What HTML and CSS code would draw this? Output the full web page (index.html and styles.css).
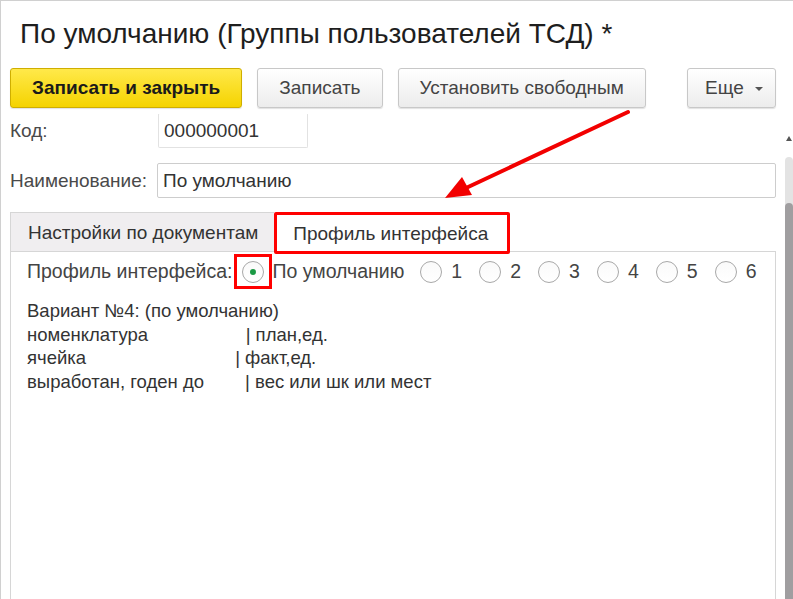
FILE: index.html
```html
<!DOCTYPE html>
<html lang="ru">
<head>
    <meta charset="UTF-8">
    <title>По умолчанию (Группы пользователей ТСД)</title>
    <link rel="stylesheet" href="styles.css">
</head>
<body>
    <div class="window">
        <h1 class="title">По умолчанию (Группы пользователей ТСД) *</h1>
        <div class="toolbar">
            <button class="btn btnMain">Записать и закрыть</button>
            <button class="btn">Записать</button>
            <button class="btn">Установить свободным</button>
            <button class="btn btnMore">Еще <span class="caret"></span></button>
        </div>
        <div class="content">
            <div class="form">
                <div class="row rowCode">
                    <label class="label">Код:</label>
                    <div class="field fieldCode">000000001</div>
                </div>
                <div class="row">
                    <label class="label">Наименование:</label>
                    <div class="field fieldName">По умолчанию</div>
                </div>
                <div class="tabs">
                    <div class="tab">Настройки по документам</div>
                    <div class="tab current">Профиль интерфейса</div>
                    <div class="tabsRest"></div>
                </div>
                <div class="panel">
                    <div class="radios">
                        <span class="radiosLabel">Профиль интерфейса:</span>
                        <span class="mark"><span class="radio checked"></span></span>
                        <span class="radioText">По умолчанию</span>
                        <span class="option"><span class="radio"></span><span class="radioText">1</span></span>
                        <span class="option"><span class="radio"></span><span class="radioText">2</span></span>
                        <span class="option"><span class="radio"></span><span class="radioText">3</span></span>
                        <span class="option"><span class="radio"></span><span class="radioText">4</span></span>
                        <span class="option"><span class="radio"></span><span class="radioText">5</span></span>
                        <span class="option"><span class="radio"></span><span class="radioText">6</span></span>
                    </div>
<pre class="note">Вариант №4: (по умолчанию)
номенклатура                   | план,ед.
ячейка                             | факт,ед.
выработан, годен до        | вес или шк или мест</pre>
                </div>
            </div>
            <div class="scrollbar">
                <span class="scrollUp"></span>
                <div class="track"><div class="thumb"></div></div>
            </div>
        </div>
        <!-- стрелка-указатель поверх формы -->
        <svg class="arrow" width="793" height="599" viewBox="0 0 793 599">
            <line x1="628" y1="112" x2="466" y2="188" stroke="#f20000" stroke-width="4" stroke-linecap="round"/>
            <polygon points="445,198 472,195 462,177" fill="#f20000"/>
        </svg>
    </div>
</body>
</html>
```

FILE: styles.css
```css
*{
    margin:0;
    padding:0;
    box-sizing:border-box;
}
body{
    font-family:"Liberation Sans", Arial, sans-serif;
    color:#333;
    background:#fff;
}
.window{
    position:relative;
    width:793px;
    height:599px;
    overflow:hidden;
    border-left:1px solid #d0d0d0;
    border-top:1px solid #d0d0d0;
}
.title{
    height:67px;
    padding:17px 0 0 19px;
    font-size:28px;
    line-height:32px;
    font-weight:normal;
    color:#1e1e1e;
}
.toolbar{
    display:flex;
    height:46px;
    padding:0 17px 0 9px;
}
.btn{
    height:40px;
    padding:0 21px;
    margin-right:15px;
    font-family:inherit;
    font-size:19px;
    color:#444;
    background:linear-gradient(#fff, #ececec);
    border:1px solid #c8c8c8;
    border-radius:3px;
    box-shadow:0 1px 1px rgba(0,0,0,.12);
}
.btnMain{
    font-weight:bold;
    color:#1a1a1a;
    background:linear-gradient(#ffe94a, #f5d300);
    border-color:#cfae00;
}
.btnMore{
    margin-left:auto;
    margin-right:0;
    padding:0 12px 0 17px;
}
.caret{
    display:inline-block;
    margin-left:6px;
    vertical-align:middle;
    border-left:4px solid transparent;
    border-right:4px solid transparent;
    border-top:4px solid #555;
}
.content{
    display:flex;
    height:485px;
    padding-left:9px;
    overflow:hidden;
}
.form{
    width:766px;
}
.row{
    display:flex;
    align-items:center;
    margin-bottom:15px;
}
.rowCode{
    margin-top:-1px;
}
.label{
    width:147px;
    font-size:19px;
    color:#4a4a4a;
}
.field{
    height:35px;
    padding:0 5px;
    line-height:33px;
    font-size:19px;
    color:#333;
    border:1px solid #cdcdcd;
    border-radius:2px;
}
.fieldCode{
    width:150px;
    margin-left:1px;
    border-color:#e2e2e2;
    border-top-color:transparent;
}
.fieldName{
    flex:1;
}
.tabs{
    display:flex;
    height:40px;
    margin-top:-1px;
}
.tab{
    height:40px;
    padding:0 16px 0 17px;
    line-height:39px;
    font-size:19px;
    color:#333;
    background:#f0eef0;
    border:1px solid #d6d6d6;
    border-right:none;
}
.tab.current{
    position:relative;
    height:42px;
    padding:0 19px 0 16px;
    background:#fff;
    border:3px solid #f00;
    border-radius:2px;
    line-height:37px;
}
.tabsRest{
    flex:1;
    border-bottom:1px solid #d6d6d6;
}
.panel{
    height:400px;
    border:1px solid #d6d6d6;
    border-top:none;
    padding:2px 0 0 16px;
}
.radios{
    display:flex;
    align-items:center;
    height:35px;
    font-size:19.5px;
    color:#444;
}
.mark{
    display:flex;
    align-items:center;
    justify-content:center;
    width:38px;
    height:35px;
    margin-left:2px;
    border:3px solid #f00;
}
.radio{
    display:inline-block;
    position:relative;
    width:22px;
    height:22px;
    border:1px solid #a8a8a8;
    border-radius:50%;
    background:linear-gradient(#fafafa, #fff);
}
.radio.checked:after{
    content:"";
    position:absolute;
    left:7px;
    top:7px;
    width:6px;
    height:6px;
    border-radius:50%;
    background:#1a9944;
}
.radioText{
    margin-left:0;
    margin-right:-1px;
}
.option{
    display:flex;
    align-items:center;
    margin-left:17px;
}
.option .radioText{
    margin-left:9px;
    margin-right:0;
}
.note{
    margin-top:10px;
    font-family:"Liberation Sans", Arial, sans-serif;
    font-size:18.5px;
    line-height:23.5px;
    color:#333;
}
.scrollbar{
    display:flex;
    flex-direction:column;
    align-items:center;
    width:8px;
    margin-left:9px;
}
.scrollUp{
    margin-top:22px;
    border-left:3px solid transparent;
    border-right:3px solid transparent;
    border-bottom:5px solid #555;
}
.track{
    flex:1;
    width:8px;
    margin-top:16px;
    padding-top:46px;
    background:#e3e3e3;
    border-radius:4px 4px 0 0;
}
.thumb{
    height:100%;
    background:#a09ea0;
    border-radius:4px 4px 0 0;
}
.arrow{
    position:absolute;
    left:-1px;
    top:-1px;
    pointer-events:none;
}
```
